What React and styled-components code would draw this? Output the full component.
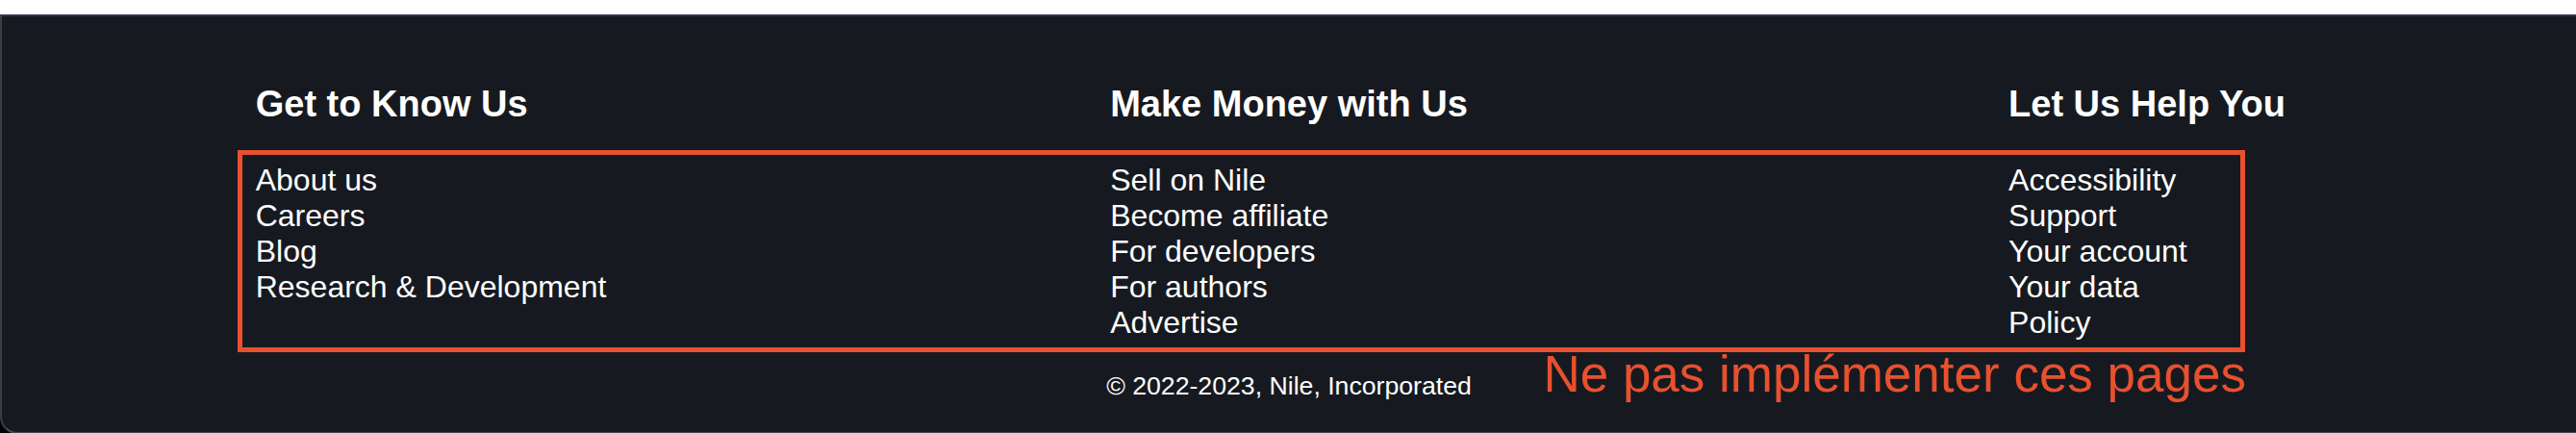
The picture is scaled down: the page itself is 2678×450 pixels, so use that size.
import React from "react";
import styled, { createGlobalStyle } from "styled-components";

const GlobalStyle = createGlobalStyle`
  html,
  body {
    margin: 0;
    padding: 0;
    background: linear-gradient(#ffffff 0 15px, #000000 15px);
  }
  body {
    padding-top: 15px;
    font-family: "Liberation Sans", Arial, sans-serif;
  }
`;

const Footer = styled.footer`
  position: relative;
  background: #161a20;
  color: #ffffff;
  border-top: 2px solid #2b3850;
  border-left: 2px solid #3b3e44;
  border-bottom: 2px solid #47494e;
  border-bottom-left-radius: 18px;
  padding: 33px 0 31.5px;
`;

const Columns = styled.div`
  display: flex;
`;

const Column = styled.div`
  flex: 1;
  display: flex;
  justify-content: center;
`;

const Heading = styled.h3`
  margin: 36.7px 0 39px;
  font-size: 38px;
  font-weight: 700;
  white-space: nowrap;
`;

const LinkList = styled.ul`
  list-style: none;
  margin: 0;
  padding: 0;
`;

const LinkItem = styled.li`
  font-size: 32px;
  white-space: nowrap;
`;

const FooterLink = styled.a`
  color: #ffffff;
  text-decoration: none;
`;

const Copyright = styled.p`
  margin: 32.7px 0 0;
  text-align: center;
  font-size: 26.67px;
`;

const AnnotationFrame = styled.div`
  position: absolute;
  left: 245px;
  top: 139px;
  width: 2087px;
  height: 210px;
  box-sizing: border-box;
  border: 5px solid #e8502e;
  pointer-events: none;
`;

const AnnotationNote = styled.span`
  position: absolute;
  right: 343px;
  top: 341px;
  color: #e8502e;
  font-size: 53px;
  white-space: nowrap;
`;

const sections = [
  {
    title: "Get to Know Us",
    links: ["About us", "Careers", "Blog", "Research & Development"],
  },
  {
    title: "Make Money with Us",
    links: [
      "Sell on Nile",
      "Become affiliate",
      "For developers",
      "For authors",
      "Advertise",
    ],
  },
  {
    title: "Let Us Help You",
    links: ["Accessibility", "Support", "Your account", "Your data", "Policy"],
  },
];

const App = () => {
  return (
    <>
      <GlobalStyle />
      <Footer>
        <Columns>
          {sections.map((section) => (
            <Column key={section.title}>
              <div>
                <Heading>{section.title}</Heading>
                <LinkList>
                  {section.links.map((link) => (
                    <LinkItem key={link}>
                      <FooterLink href="#">{link}</FooterLink>
                    </LinkItem>
                  ))}
                </LinkList>
              </div>
            </Column>
          ))}
        </Columns>
        <Copyright>© 2022-2023, Nile, Incorporated</Copyright>
        <AnnotationFrame />
        <AnnotationNote>Ne pas implémenter ces pages</AnnotationNote>
      </Footer>
    </>
  );
};

export default App;
